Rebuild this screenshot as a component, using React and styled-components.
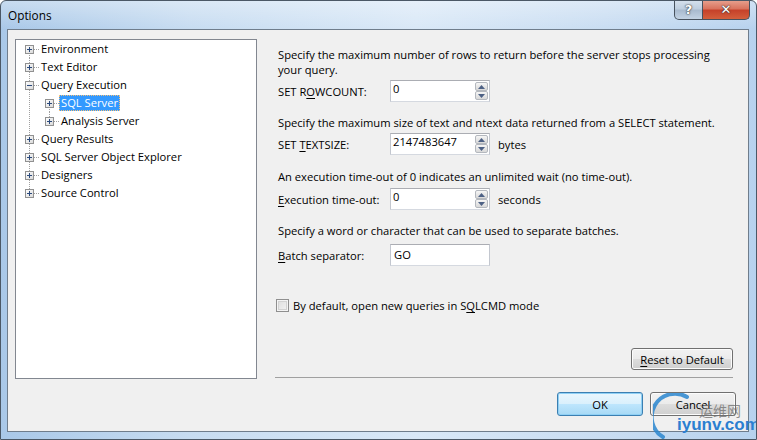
import React from 'react'
import styled, { createGlobalStyle } from 'styled-components'

const GlobalStyle = createGlobalStyle`
	html, body {
		margin: 0;
		padding: 0;
		background: #ffffff;
	}
	body {
		font-family: 'Open Sans', 'Noto Sans', sans-serif;
		font-size: 11.2px;
		color: #000;
	}
`

const Window = styled.div`
	position: relative;
	width: 757px;
	height: 440px;
	box-sizing: border-box;
	border: 1px solid #4b5866;
	border-radius: 6px 6px 0 0;
	background:
		linear-gradient(180deg, rgba(255, 255, 255, 0.35) 0, rgba(255, 255, 255, 0) 28px),
		linear-gradient(90deg, #a9c8e8 0, #c7dcf1 25%, #d9e8f7 55%, #c9ddf2 80%, #b7d2ee 100%);
	display: flex;
	flex-direction: column;
	overflow: hidden;
`

const TitleBar = styled.div`
	height: 28px;
	display: flex;
	align-items: flex-start;
	justify-content: space-between;
	padding-left: 7px;
`

const Title = styled.div`
	line-height: 28px;
	font-size: 11.8px;
	color: #000;
`

const Caption = styled.div`
	display: flex;
	margin-top: -1px;
	margin-right: 6px;
`

const CaptionButton = styled.div`
	height: 20px;
	width: ${p => p.$width}px;
	box-sizing: border-box;
	border: 1px solid #47525e;
	border-top: none;
	display: flex;
	align-items: center;
	justify-content: center;
	font-family: 'DejaVu Sans', sans-serif;
	font-weight: bold;
	color: #fff;
	font-size: 13px;
	text-shadow: 0 0 2px #333, 0 0 1px #222;
	background: ${p =>
		p.$close
			? 'linear-gradient(180deg, #e8a391 0, #d9745f 45%, #c6422a 55%, #d35f3c 100%)'
			: 'linear-gradient(180deg, #d7e2ee 0, #bfcfe0 45%, #a9bbcf 55%, #c3d3e4 100%)'};
	border-radius: ${p => (p.$close ? '0 0 5px 0' : '0 0 0 5px')};
	${p => (p.$close ? 'border-left: none;' : '')}
`

const Client = styled.div`
	flex: 1;
	margin: 0 7px 7px 6px;
	border: 1px solid #6f7d8c;
	background: #f0f0f0;
	padding: 9px 12px 0 7px;
	display: flex;
	flex-direction: column;
`

const Body = styled.div`
	display: flex;
	height: 340px;
`

const TreePanel = styled.div`
	width: 242px;
	box-sizing: border-box;
	border: 1px solid #828790;
	background: #fff;
`

const TreeRow = styled.div`
	height: 18px;
	display: flex;
	align-items: center;
	padding-left: 3px;
`

const TreeLabel = styled.span`
	height: 16px;
	line-height: 16px;
	padding: 0 2px;
	box-sizing: border-box;
	color: ${p => (p.$selected ? '#fff' : '#000')};
	background: ${p => (p.$selected ? '#3399ff' : 'transparent')};
	outline: ${p => (p.$selected ? '1px dotted #f5c07a' : 'none')};
	outline-offset: -1px;
	white-space: nowrap;
`

const Right = styled.div`
	flex: 1;
	margin-left: 18px;
	margin-right: 3px;
	display: flex;
	flex-direction: column;
`

const Options = styled.div`
	flex: 1;
	padding: 8px 0 0 3px;
`

const Section = styled.div`
	margin-top: ${p => p.$gap ?? 12}px;
`

const Desc = styled.div`
	line-height: 15px;
	white-space: nowrap;
	margin-bottom: ${p => p.$after ?? 3}px;
`

const FieldRow = styled.div`
	display: flex;
	align-items: center;
	height: 22px;
`

const Label = styled.div`
	width: 112px;
	white-space: nowrap;
`

const Key = styled.span`
	text-decoration: underline;
	text-underline-offset: 2px;
`

const TextBox = styled.div`
	width: 100px;
	height: 22px;
	box-sizing: border-box;
	border: 1px solid;
	border-color: #abadb3 #c3c7cf #d5d9e0 #c3c7cf;
	background: #fff;
	display: flex;
`

const BoxText = styled.div`
	flex: 1;
	padding: 0 0 0 2px;
	line-height: ${p => (p.$center ? 20 : 16)}px;
`

const Spin = styled.div`
	width: 13px;
	margin: 1px 1px 1px 0;
	display: flex;
	flex-direction: column;
`

const SpinPart = styled.div`
	flex: 1;
	box-sizing: border-box;
	border: 1px solid #b4b8be;
	border-radius: 2px;
	background: linear-gradient(180deg, #f6f6f6 0, #e6e6e6 50%, #d9d9d9 100%);
	display: flex;
	align-items: center;
	justify-content: center;
`

const Unit = styled.div`
	margin-left: 8px;
`

const CheckRow = styled.div`
	margin-top: 32px;
	display: flex;
	align-items: center;
	gap: 4px;
	margin-left: -2px;
`

const CheckBox = styled.div`
	width: 13px;
	height: 13px;
	box-sizing: border-box;
	border: 1px solid #8f8f8f;
	background: linear-gradient(135deg, #dcdcdc 0, #f4f4f4 100%);
	box-shadow: inset 0 0 0 1px #f4f4f4, inset 0 0 0 2px #d2d2d2;
`

const ResetRow = styled.div`
	display: flex;
	justify-content: flex-end;
	padding-bottom: 7px;
	border-bottom: 1px solid #a0a0a0;
	margin-bottom: 1px;
`

const Button = styled.div`
	width: ${p => p.$width}px;
	height: ${p => p.$height || 23}px;
	box-sizing: border-box;
	border: 1px solid ${p => (p.$primary ? '#3c7fb1' : '#707070')};
	border-radius: 3px;
	background: ${p =>
		p.$primary
			? 'linear-gradient(180deg, #eaf6fd 0, #d9f0fc 50%, #bee6fd 50%, #a7d9f5 100%)'
			: 'linear-gradient(180deg, #f2f2f2 0, #ebebeb 50%, #dddddd 50%, #cfcfcf 100%)'};
	box-shadow: inset 0 0 0 1px ${p => (p.$primary ? '#8fd0f5' : '#fcfcfc')};
	display: flex;
	align-items: center;
	justify-content: center;
`

const Footer = styled.div`
	display: flex;
	justify-content: flex-end;
	gap: 7px;
	padding-top: 13px;
`

const Watermark = styled.div`
	position: absolute;
	left: 652px;
	top: 392px;
	width: 105px;
	height: 48px;
	pointer-events: none;
`

const WmCn = styled.div`
	position: absolute;
	left: 46px;
	top: 7px;
	font-family: 'Noto Sans CJK SC', sans-serif;
	font-size: 14px;
	color: rgba(110, 110, 110, 0.75);
`

const WmEn = styled.div`
	position: absolute;
	left: 24px;
	top: 22px;
	font-family: 'Liberation Sans', sans-serif;
	font-weight: bold;
	font-size: 17px;
	color: #2b7fd1;
`

const Gutter = ({ up, down, branch, box }) => (
	<svg width="20" height="18" style={{ display: 'block', flex: 'none' }}>
		{(up || down) && (
			<line
				x1="10.5"
				x2="10.5"
				y1={up ? 0 : 9}
				y2={down ? 18 : 9}
				stroke="#a0a0a0"
				strokeDasharray="1 1"
			/>
		)}
		{branch && <line x1="11" x2="20" y1="9.5" y2="9.5" stroke="#a0a0a0" strokeDasharray="1 1" />}
		{box && (
			<g>
				<defs>
					<linearGradient id="bx" x1="0" y1="0" x2="1" y2="1">
						<stop offset="0" stopColor="#ffffff" />
						<stop offset="1" stopColor="#d8d8d8" />
					</linearGradient>
				</defs>
				<rect x="6.5" y="5.5" width="8" height="8" fill="url(#bx)" stroke="#919191" />
				<line x1="8" x2="13" y1="9.5" y2="9.5" stroke="#2b4a7c" />
				{box === 'plus' && <line x1="10.5" x2="10.5" y1="7" y2="12" stroke="#2b4a7c" />}
			</g>
		)}
	</svg>
)

const Arrow = ({ up }) => (
	<svg width="7" height="4" style={{ display: 'block' }}>
		<path d={up ? 'M0 4 L3.5 0 L7 4 Z' : 'M0 0 L3.5 4 L7 0 Z'} fill="#4d6185" />
	</svg>
)

const tree = [
	{ label: 'Environment', level: 0, box: 'plus' },
	{ label: 'Text Editor', level: 0, box: 'plus' },
	{ label: 'Query Execution', level: 0, box: 'minus' },
	{ label: 'SQL Server', level: 1, box: 'plus', selected: true, first: true },
	{ label: 'Analysis Server', level: 1, box: 'plus', last: true },
	{ label: 'Query Results', level: 0, box: 'plus' },
	{ label: 'SQL Server Object Explorer', level: 0, box: 'plus' },
	{ label: 'Designers', level: 0, box: 'plus' },
	{ label: 'Source Control', level: 0, box: 'plus', last: true },
]

const Tree = () => (
	<TreePanel>
		{tree.map((item, i) => (
			<TreeRow key={item.label}>
				{item.level === 0 ? (
					<Gutter up={i !== 0} down={!item.last} branch box={item.box} />
				) : (
					<>
						<Gutter up down />
						<Gutter up={!item.first} down={!item.last} branch box={item.box} />
					</>
				)}
				<TreeLabel $selected={item.selected}>{item.label}</TreeLabel>
			</TreeRow>
		))}
	</TreePanel>
)

const NumberBox = ({ value }) => (
	<TextBox>
		<BoxText>{value}</BoxText>
		<Spin>
			<SpinPart>
				<Arrow up />
			</SpinPart>
			<SpinPart>
				<Arrow />
			</SpinPart>
		</Spin>
	</TextBox>
)

const App = () => (
	<>
		<GlobalStyle />
		<Window>
			<TitleBar>
				<Title>Options</Title>
				<Caption>
					<CaptionButton $width={29}>?</CaptionButton>
					<CaptionButton $width={47} $close>
						✕
					</CaptionButton>
				</Caption>
			</TitleBar>
			<Client>
				<Body>
					<Tree />
					<Right>
						<Options>
							<Section $gap={0}>
								<Desc $after={3}>
									Specify the maximum number of rows to return before the server stops processing
									<br />
									your query.
								</Desc>
								<FieldRow>
									<Label>
										SET R<Key>O</Key>WCOUNT:
									</Label>
									<NumberBox value="0" />
								</FieldRow>
							</Section>
							<Section $gap={13}>
								<Desc $after={3}>
									Specify the maximum size of text and ntext data returned from a SELECT statement.
								</Desc>
								<FieldRow>
									<Label>
										SET <Key>T</Key>EXTSIZE:
									</Label>
									<NumberBox value="2147483647" />
									<Unit>bytes</Unit>
								</FieldRow>
							</Section>
							<Section $gap={14}>
								<Desc $after={4}>
									An execution time-out of 0 indicates an unlimited wait (no time-out).
								</Desc>
								<FieldRow>
									<Label>
										<Key>E</Key>xecution time-out:
									</Label>
									<NumberBox value="0" />
									<Unit>seconds</Unit>
								</FieldRow>
							</Section>
							<Section $gap={13}>
								<Desc $after={6}>Specify a word or character that can be used to separate batches.</Desc>
								<FieldRow>
									<Label>
										<Key>B</Key>atch separator:
									</Label>
									<TextBox>
										<BoxText $center style={{ paddingLeft: '3px' }}>
											GO
										</BoxText>
									</TextBox>
								</FieldRow>
							</Section>
							<CheckRow>
								<CheckBox />
								<span>
									By default, open new queries in S<Key>Q</Key>LCMD mode
								</span>
							</CheckRow>
						</Options>
						<ResetRow>
							<Button $width={102} $height={22}>
								<span>
									<Key>R</Key>eset to Default
								</span>
							</Button>
						</ResetRow>
					</Right>
				</Body>
				<Footer>
					<Button $width={86} $height={24} $primary>
						OK
					</Button>
					<Button $width={86} $height={24}>
						Cancel
					</Button>
				</Footer>
			</Client>
			<Watermark>
				<svg width="48" height="48" style={{ position: 'absolute', left: 0, top: 0 }}>
					<path
						d="M34 4 A22 22 0 0 0 10 44"
						fill="none"
						stroke="#2a86cf"
						strokeWidth="4"
						strokeLinecap="round"
						opacity="0.85"
					/>
				</svg>
				<WmCn>运维网</WmCn>
				<WmEn>iyunv.com</WmEn>
			</Watermark>
		</Window>
	</>
)

export default App
